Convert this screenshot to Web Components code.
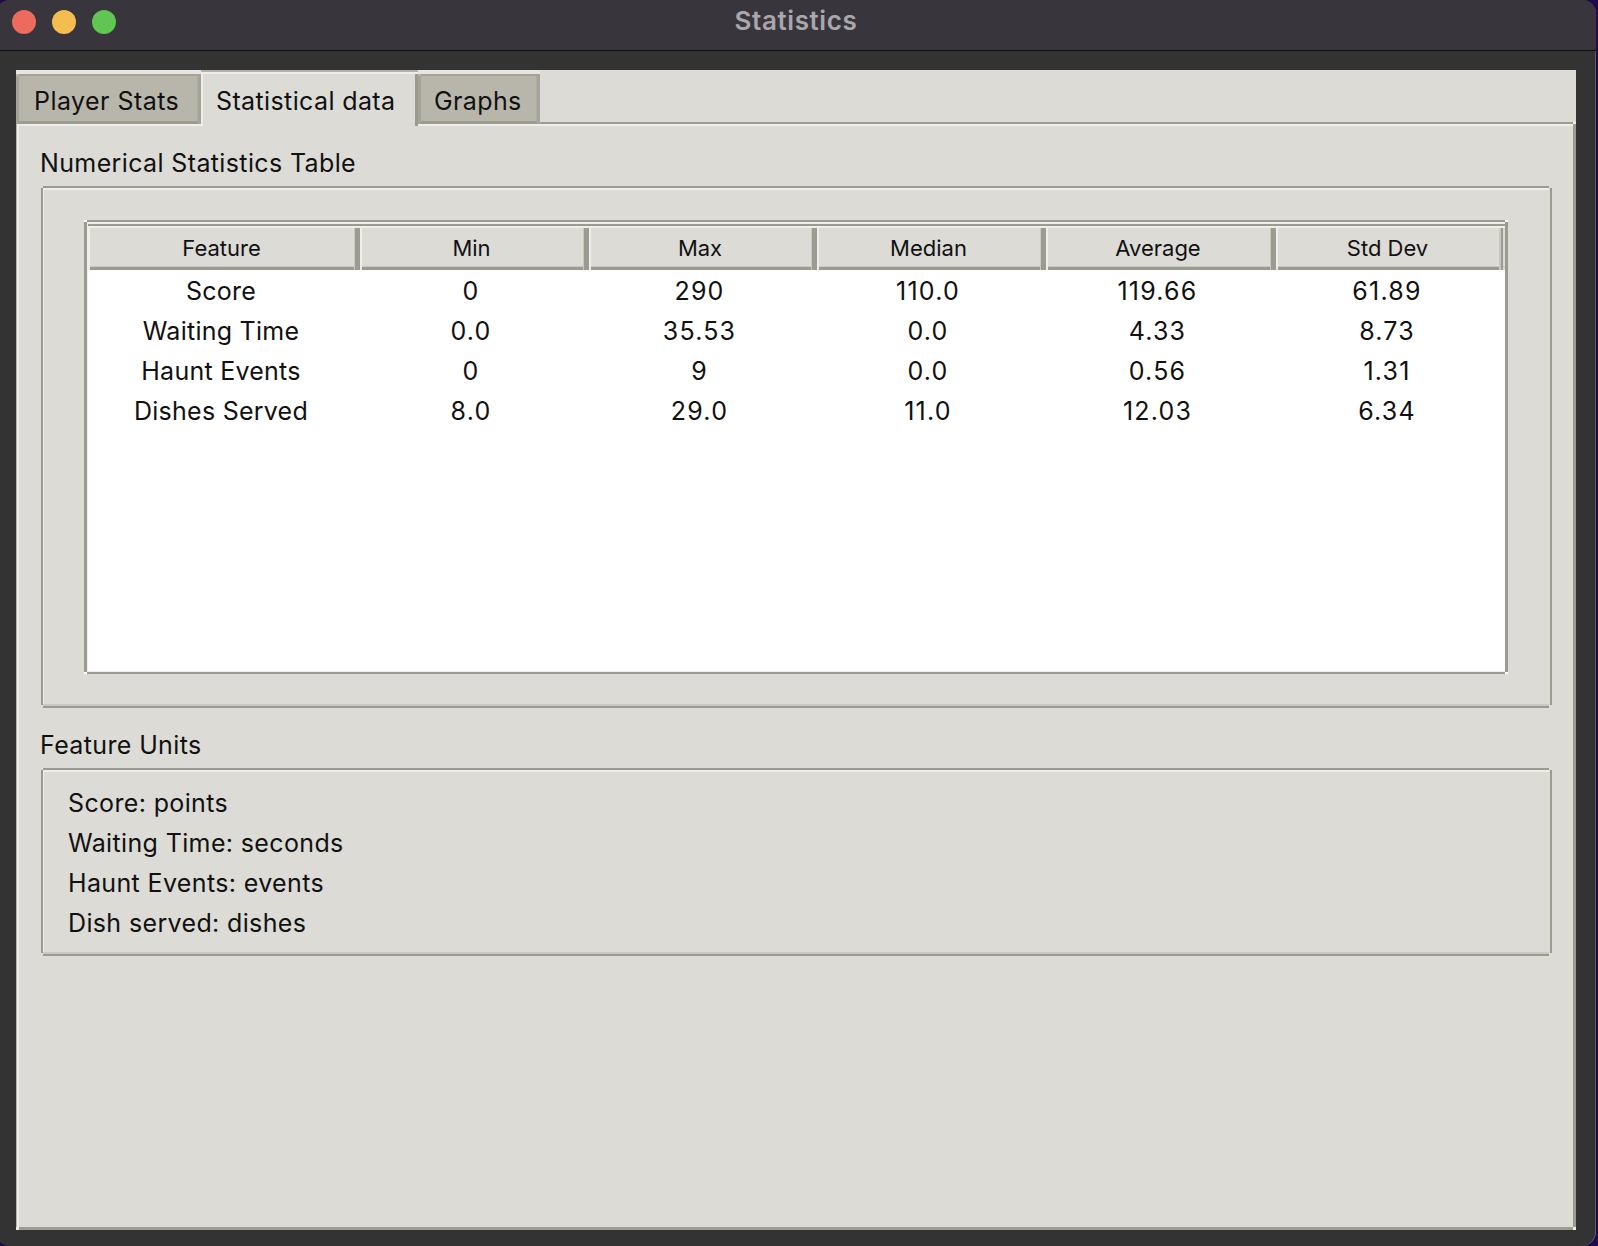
<!DOCTYPE html>
<html lang="en">
<head>
<meta charset="utf-8">
<title>Statistics</title>
<style>
  html, body { margin: 0; height: 100%; overflow: hidden; background: #1c0b4f; }
  body {
    font-family: Inter, "Liberation Sans", sans-serif;
    color: #111;
    --bg: #dcdbd6; --dk: #9c9b90; --lt: #eeede9; --md: #c9c8c2; --tab: #b8b5aa; --tabdk: #a5a499;
  }
</style>
</head>
<body>
<ui-window title="Statistics">
  <ui-notebook>
    <ui-tab slot="tabs" class="first">Player Stats</ui-tab>
    <ui-tab slot="tabs" active>Statistical data</ui-tab>
    <ui-tab slot="tabs" class="last">Graphs</ui-tab>
    <ui-section label="Numerical Statistics Table" kind="table">
      <ui-stats-table></ui-stats-table>
    </ui-section>
    <ui-section label="Feature Units" kind="text">
      <ui-line>Score: points</ui-line>
      <ui-line>Waiting Time: seconds</ui-line>
      <ui-line>Haunt Events: events</ui-line>
      <ui-line>Dish served: dishes</ui-line>
    </ui-section>
  </ui-notebook>
</ui-window>
<script>
const shadow = (el, html) => { el.attachShadow({ mode: 'open' }).innerHTML = html; };

class UiWindow extends HTMLElement {
  connectedCallback() {
    if (this.shadowRoot) return;
    shadow(this, `
      <style>
        :host { display: flex; flex-direction: column; box-sizing: border-box; width: 1600px; height: 1246px;
                margin-left: -4px; background: #333; border-radius: 14px; overflow: hidden;
                box-shadow: inset -1px 0 0 #5c5c5c; }
        .bar { flex: none; box-sizing: content-box; height: 44px; padding-bottom: 6px; display: grid;
               grid-template-columns: 1fr auto 1fr; align-items: center;
               background: #38353d; border-bottom: 1px solid #0c0c0c; }
        .lights { display: flex; gap: 16px; padding-left: 16px; }
        .lights i { width: 24px; height: 24px; border-radius: 50%; display: block; }
        .t { font-size: 26px; font-weight: 600; color: #a9a7aa; line-height: 42px; letter-spacing: .6px; padding-bottom: 2px; }
        .body { flex: 1; display: flex; padding: 19px 20px 16px 20px; min-height: 0; }
      </style>
      <div class="bar">
        <div class="lights"><i style="background:#ee6a5e"></i><i style="background:#f5bd4f"></i><i style="background:#61c554"></i></div>
        <div class="t">${this.getAttribute('title')}</div>
        <div></div>
      </div>
      <div class="body"><slot></slot></div>`);
  }
}

class UiNotebook extends HTMLElement {
  connectedCallback() {
    if (this.shadowRoot) return;
    shadow(this, `
      <style>
        :host { display: flex; flex-direction: column; flex: 1; background: var(--bg); }
        .tabs { display: flex; flex: none; height: 52px; position: relative; z-index: 1; }
        .pane { flex: 1; box-sizing: border-box; padding: 21px 24px 0 25px; background-color: var(--lt);
          background-repeat: no-repeat;
          background-image:
            linear-gradient(var(--bg) 0 0),
            linear-gradient(var(--dk) 0 0), linear-gradient(var(--lt) 0 0),
            linear-gradient(#b6b5ac 0 0),
            linear-gradient(var(--dk) 0 0), linear-gradient(var(--dk) 0 0),
            linear-gradient(var(--md) 0 0);
          background-position:
            3px 4px,
            3px 0, 3px 2px,
            0 0,
            100% 2px, 3px 100%,
            3px calc(100% - 3px);
          background-size:
            calc(100% - 6px) calc(100% - 7px),
            calc(100% - 6px) 2px, calc(100% - 6px) 2px,
            1px calc(100% - 3px),
            3px calc(100% - 5px), calc(100% - 6px) 3px,
            calc(100% - 6px) 1px;
        }
      </style>
      <div class="tabs"><slot name="tabs"></slot></div>
      <div class="pane"><slot></slot></div>`);
  }
}

class UiTab extends HTMLElement {
  connectedCallback() {
    if (this.shadowRoot) return;
    shadow(this, `
      <style>
        :host { display: block; box-sizing: border-box; flex: none; font-size: 25px; line-height: 40px; color: #111;
                letter-spacing: .38px; height: 54px; padding: 11px 0 0 19px;
                background-repeat: no-repeat; background-color: var(--tab);
                background-image:
                  linear-gradient(#e6e5e1 0 0), linear-gradient(var(--tabdk) 0 0),
                  linear-gradient(var(--tabdk) 0 0), linear-gradient(var(--tabdk) 0 0),
                  linear-gradient(var(--dk) 0 0), linear-gradient(#aeada3 0 0);
                background-position: 0 0, 3px 4px, 0 6px, 100% 4px, 0 100%, calc(100% - 3px) 4px;
                background-size: 100% 4px, calc(100% - 3px) 2px, 3px 48px, 3px 50px, 100% 3px, 1px 47px; }
        :host(.first) { width: 185px; padding-left: 18px; letter-spacing: .45px; }
        :host(.last) { width: 122px; padding-left: 16px; }
        :host([active]) { width: 217px; height: 56px; padding-left: 15px; margin-bottom: -4px;
                background-color: var(--bg);
                background-image:
                  linear-gradient(#b4b3a9 0 0), linear-gradient(var(--lt) 0 0),
                  linear-gradient(var(--lt) 0 0), linear-gradient(var(--dk) 0 0);
                background-position: 0 0, 0 2px, 0 2px, 100% 4px;
                background-size: 100% 2px, 100% 2px, 2px 100%, 3px 100%; }
      </style>
      <slot></slot>`);
  }
}

class UiSection extends HTMLElement {
  connectedCallback() {
    if (this.shadowRoot) return;
    shadow(this, `
      <style>
        :host { display: block; }
        :host([kind="text"]) { margin-top: 17px; }
        .label { font-size: 25px; line-height: 40px; margin: 0 0 3px -1px; color: #111; letter-spacing: .37px; }
        .frame { box-sizing: border-box; background-color: var(--bg); background-repeat: no-repeat;
          background-image:
            linear-gradient(var(--dk) 0 0), linear-gradient(var(--lt) 0 0),
            linear-gradient(var(--dk) 0 0), linear-gradient(var(--dk) 0 0),
            linear-gradient(var(--dk) 0 0), linear-gradient(var(--md) 0 0),
            linear-gradient(var(--lt) 0 0);
          background-position: 2px 0, 2px 2px, 0 2px, 100% 2px, 2px 100%, 2px calc(100% - 2px), 2px 2px;
          background-size:
            calc(100% - 5px) 2px, calc(100% - 5px) 2px,
            2px calc(100% - 5px), 2px calc(100% - 5px),
            calc(100% - 5px) 2px, calc(100% - 5px) 2px,
            1px calc(100% - 5px); }
        :host([kind="table"]) .frame { padding: 34px 44px 34px 43px; }
        :host([kind="text"]) .frame { padding: 15px 28px 13px 27px; }
      </style>
      <div class="label">${this.getAttribute('label')}</div>
      <div class="frame"><slot></slot></div>`);
  }
}

class UiLine extends HTMLElement {
  connectedCallback() {
    if (this.shadowRoot) return;
    shadow(this, `<style>:host { display: block; font-size: 25px; line-height: 40px; color: #111; letter-spacing: .36px; }</style><slot></slot>`);
  }
}

class UiStatsTable extends HTMLElement {
  connectedCallback() {
    if (this.shadowRoot) return;
    const head = ['Feature', 'Min', 'Max', 'Median', 'Average', 'Std Dev'];
    const rows = [
      ['Score', '0', '290', '110.0', '119.66', '61.89'],
      ['Waiting Time', '0.0', '35.53', '0.0', '4.33', '8.73'],
      ['Haunt Events', '0', '9', '0.0', '0.56', '1.31'],
      ['Dishes Served', '8.0', '29.0', '11.0', '12.03', '6.34'],
    ];
    shadow(this, `
      <style>
        :host { display: block; box-sizing: border-box; height: 454px; padding: 4px 3px 3px 4px; background-color: #fff;
          background-repeat: no-repeat;
          background-image:
            linear-gradient(var(--dk) 0 0), linear-gradient(var(--lt) 0 0),
            linear-gradient(var(--dk) 0 0), linear-gradient(var(--lt) 0 0),
            linear-gradient(var(--dk) 0 0), linear-gradient(var(--dk) 0 0), linear-gradient(var(--lt) 0 0);
          background-position: 3px 0, 3px 2px, 0 2px, 3px 2px, 100% 2px, 3px 100%, 3px calc(100% - 2px);
          background-size:
            calc(100% - 6px) 2px, calc(100% - 6px) 2px,
            3px calc(100% - 4px), 1px calc(100% - 5px),
            3px calc(100% - 4px), calc(100% - 6px) 2px, calc(100% - 6px) 1px; }
        .grid { display: grid; grid-template-columns: 272px 229px 228px 229px 230px 229px; grid-template-rows: 46px; grid-auto-rows: 40px; }
        .h { box-sizing: border-box; height: 46px; font-size: 22px; line-height: 39px; text-align: center;
             padding: 5px 6px 0 0; color: #111; background-color: var(--bg); background-repeat: no-repeat;
             background-image:
               linear-gradient(var(--dk) 0 0), linear-gradient(var(--lt) 0 0),
               linear-gradient(var(--lt) 0 0), linear-gradient(var(--dk) 0 0),
               linear-gradient(var(--md) 0 0), linear-gradient(var(--dk) 0 0), linear-gradient(var(--md) 0 0);
             background-position: 0 0, 0 2px, 0 2px, 100% 2px, calc(100% - 5px) 4px, 0 100%, 0 calc(100% - 3px);
             background-size: 100% 2px, 100% 2px, 2px 100%, 5px calc(100% - 2px), 1px calc(100% - 4px), 100% 3px, 100% 1px; }
        .h:nth-child(6) { padding-right: 6px; background-position: 0 0, 0 2px, 0 2px, calc(100% - 2px) 2px, calc(100% - 4px) 4px, 0 100%, 0 calc(100% - 3px);
             background-size: 100% 2px, 100% 2px, 2px 100%, 2px calc(100% - 2px), 2px calc(100% - 4px), calc(100% - 2px) 3px, 100% 1px; }
        .h:first-child { padding-right: 5px; }
        .d { box-sizing: border-box; padding: 1px 7px 0 0; font-size: 25px; line-height: 40px; text-align: center; color: #111;
             letter-spacing: 1.2px; }
        .d.f { padding-right: 6px; letter-spacing: .25px; }
      </style>
      <div class="grid">
        ${head.map(h => `<div class="h">${h}</div>`).join('')}
        ${rows.map(r => r.map((c, i) => `<div class="d${i ? '' : ' f'}">${c}</div>`).join('')).join('')}
      </div>`);
  }
}

customElements.define('ui-window', UiWindow);
customElements.define('ui-notebook', UiNotebook);
customElements.define('ui-tab', UiTab);
customElements.define('ui-section', UiSection);
customElements.define('ui-line', UiLine);
customElements.define('ui-stats-table', UiStatsTable);
</script>
</body>
</html>
